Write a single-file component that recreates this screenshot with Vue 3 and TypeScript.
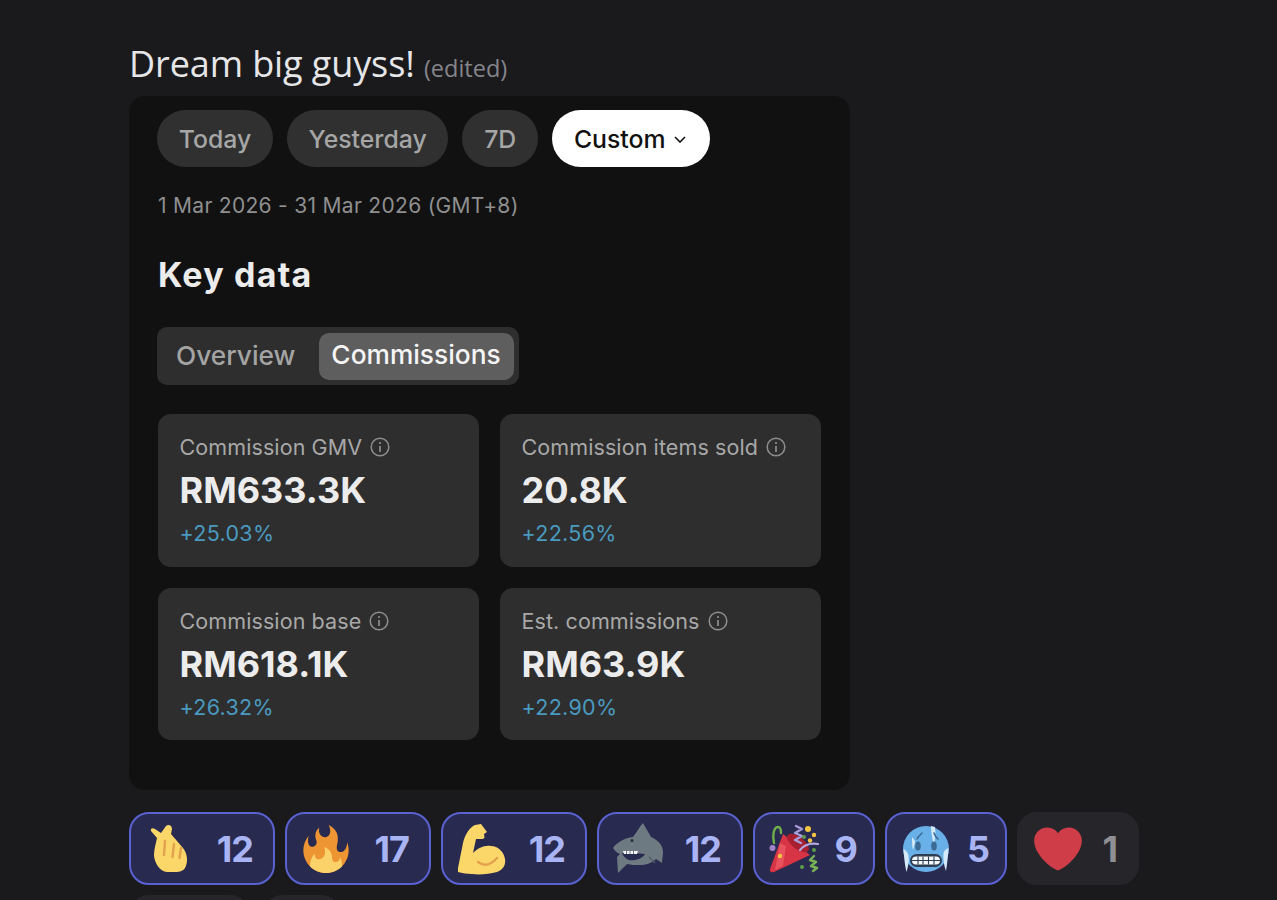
<script setup lang="ts">
type Reaction = { id: string; count: number; mine: boolean };

const chips = ["Today", "Yesterday", "7D"];

const stats = [
	{ label: "Commission GMV", value: "RM633.3K", change: "+25.03%" },
	{ label: "Commission items sold", value: "20.8K", change: "+22.56%" },
	{ label: "Commission base", value: "RM618.1K", change: "+26.32%" },
	{ label: "Est. commissions", value: "RM63.9K", change: "+22.90%" }
];

const reactions: Reaction[] = [
	{ id: "hand", count: 12, mine: true },
	{ id: "fire", count: 17, mine: true },
	{ id: "muscle", count: 12, mine: true },
	{ id: "shark", count: 12, mine: true },
	{ id: "party", count: 9, mine: true },
	{ id: "cold", count: 5, mine: true },
	{ id: "heart", count: 1, mine: false }
];
</script>

<template>
	<div class="page">
		<h1 class="message">Dream big guyss! <span class="edited">(edited)</span></h1>

		<div class="shot">
			<div class="chips">
				<button v-for="chip in chips" :key="chip" class="chip">{{ chip }}</button>
				<button class="chip active">
					Custom
					<svg class="chevron" viewBox="0 0 12 7" width="12" height="7">
						<path d="M1 1l5 5 5-5" fill="none" stroke="#111" stroke-width="1.6" />
					</svg>
				</button>
			</div>
			<div class="range">1 Mar 2026 - 31 Mar 2026 (GMT+8)</div>
			<h2 class="title">Key data</h2>
			<div class="tabs">
				<span class="tab">Overview</span>
				<span class="tab selected">Commissions</span>
			</div>
			<div class="grid">
				<div v-for="stat in stats" :key="stat.label" class="stat">
					<div class="label">
						{{ stat.label }}
						<svg viewBox="0 0 20 20" width="20" height="20">
							<circle cx="10" cy="10" r="8.8" fill="none" stroke="#8e8e8e" stroke-width="1.5" />
							<circle cx="10" cy="6" r="1.1" fill="#8e8e8e" />
							<path d="M10 9v6" stroke="#8e8e8e" stroke-width="1.7" />
						</svg>
					</div>
					<div class="value">{{ stat.value }}</div>
					<div class="change">{{ stat.change }}</div>
				</div>
			</div>
		</div>

		<div class="reactions">
			<div v-for="r in reactions" :key="r.id" class="reaction" :class="{ mine: r.mine, narrow: r.count < 10 && r.mine }">
				<svg v-if="r.id === 'hand'" class="emoji" viewBox="0 0 48 48">
					<path d="M5 6C4 3 7 2.500 9 4l6 4 5-7c2-2 6-1 6 3l-1 5 12 14c5 6 5 15 2 20-3 5-11 4-18 4-7 0-13-10-13-17 0-6 2-12 3-17z" fill="#fbd669" />
					<path d="M19 16l-1 14M28 19l-1.500 13M35 23l-1.500 10" fill="none" stroke="#e4a24e" stroke-width="2.400" stroke-linecap="round" />
				</svg>
				<svg v-else-if="r.id === 'fire'" class="emoji" viewBox="0 0 36 36">
					<path d="M35 19c0-2.062-.367-4.039-1.04-5.868-.46 5.389-3.333 8.157-6.335 6.868-2.812-1.208-.917-5.917-.777-8.164.236-3.809-.012-8.169-6.931-11.794 2.875 5.5.333 8.917-2.333 9.125-2.958.231-5.667-2.542-4.667-7.042-3.238 2.386-3.332 6.402-2.333 9 1.042 2.708-.042 4.958-2.583 5.208-2.84.28-4.418-3.041-2.963-8.333C2.52 10.965 1 14.805 1 19c0 9.389 7.611 17 17 17s17-7.611 17-17z" fill="#ed9433" />
					<path d="M28.394 23.999c.148 3.084-2.561 4.293-4.019 3.709-2.106-.843-1.541-2.291-2.083-5.291s-2.625-5.083-5.708-6c2.25 6.333-1.247 8.667-3.08 9.084-1.872.426-3.753-.001-3.968-4.007C7.352 23.668 6 26.676 6 30c0 .368.023.73.055 1.09C9.125 34.124 13.342 36 18 36s8.875-1.876 11.945-4.91c.032-.36.055-.722.055-1.09 0-2.187-.584-4.236-1.606-6.001z" fill="#fbd26a" />
				</svg>
				<svg v-else-if="r.id === 'muscle'" class="emoji" viewBox="0 0 48 48">
					<path d="M0 43L5 18C7 9 12 2 17 0l6-1 6 8-3 2 .5 4-2 1H18l-3 14c5-5 11-8 18-7 7 0 13 6 14 13 1 6-2 11-8 13-8 2-17 3-25 2-5 0-10-1-14-2z" fill="#fbd669" />
					<path d="M20 37q9 7 19-4" fill="none" stroke="#e4a24e" stroke-width="2.400" stroke-linecap="round" />
				</svg>
				<svg v-else-if="r.id === 'shark'" class="emoji" viewBox="0 0 48 48">
					<path d="M-1 23C3 17 11 13 19 12c4-5 7-11 10-14 2 4 6 10 8 14 7 3 12 8 12 15 0 4-1 7-1 11l-6-4c-4 4-10 6-16 6-5 0-9 0-13-1L4 48l-1-16 3-3c-3-1-5-3-7-6z" fill="#6e7a82" />
					<path d="M8 28c7 0 15 0 23 1-3 5-10 7-16 6-3-1-6-4-7-7z" fill="#282a50" />
					<path d="M9 26h15l-1 3H10z" fill="#f3f3f3" />
					<path d="M12.500 26v3M16 26v3M19.500 26v3" stroke="#6e7a82" stroke-width="1" />
					<circle cx="18" cy="15.500" r="1.500" fill="#2b2f36" />
					<path d="M35 32l6 6" stroke="#4f5a62" stroke-width="1.200" />
				</svg>
				<svg v-else-if="r.id === 'party'" class="emoji" viewBox="0 0 48 48">
					<path d="M0 44L13 9l27 21L4 47C1 48-1 46 0 44z" fill="#d73545" />
					<path d="M10 18L5 45l8-4 3-20z" fill="#e8525c" />
					<ellipse cx="28" cy="18" rx="6" ry="13" transform="rotate(-52 28 18)" fill="#a8202f" />
					<path d="M4 18C2 10 4 2 8 2c3 0 3 3 3 6" fill="none" stroke="#6fae4a" stroke-width="2.400" stroke-linecap="round" />
					<path d="M26 1l6 3-7 4 7 3-7 4 6 3" fill="none" stroke="#a99bd6" stroke-width="2.400" stroke-linecap="round" stroke-linejoin="round" />
					<path d="M30 25c4-5 11-7 18-6" fill="none" stroke="#b3a6dd" stroke-width="2.200" stroke-linecap="round" />
					<path d="M44 31l-4 4 6 2-5 4 6 2-4 3" fill="none" stroke="#77b255" stroke-width="2.400" stroke-linecap="round" stroke-linejoin="round" />
					<circle cx="38" cy="4" r="3" fill="#f5c542" />
					<circle cx="44" cy="10" r="2.200" fill="#f5c542" />
					<circle cx="40" cy="15.500" r="2.200" fill="#f5c542" />
					<circle cx="34" cy="12" r="2" fill="#5e9c46" />
					<circle cx="2.500" cy="23" r="3" fill="#a082c8" />
					<circle cx="44" cy="25" r="2" fill="#5e9c46" />
					<circle cx="32" cy="42" r="2" fill="#5e9c46" />
					<circle cx="10" cy="31" r="2.200" fill="#f5c542" />
				</svg>
				<svg v-else-if="r.id === 'cold'" class="emoji" viewBox="0 0 48 48">
					<circle cx="24" cy="24" r="23" fill="#6ab0e8" />
					<path d="M29 1c0 6 1 12 3 19 1-6 2-12 1-18zM10 12c0 5 0 9 1 13 1-3 2-6 2-9zM1.500 24C2 32 3 41 4.500 47c1.500-5 3-11 2-17-1-3-3-5-5-6zM46.500 23C46 32 45 40 44 46c-2-5-3-12-2.500-18 1-3 3-4 5-5z" fill="#d3e9f8" />
					<ellipse cx="16" cy="21" rx="2.800" ry="4.500" fill="#3b6a94" />
					<ellipse cx="32" cy="21" rx="2.800" ry="4.500" fill="#3b6a94" />
					<path d="M36 14c-2-1.500-3-3-4-6M15 14c1-2 3-4 5-6" fill="none" stroke="#3b6a94" stroke-width="1.600" stroke-linecap="round" />
					<rect x="8" y="29" width="32" height="13" rx="6.500" fill="#2c3e52" />
					<path d="M14 31.500h20a4 4 0 0 1 0 8H14a4 4 0 0 1 0-8z" fill="#f4f7fa" />
					<path d="M16 31.500v8M21 31.500v8M26.500 31.500v8M32 31.500v8M10 35.500h28" stroke="#2c3e52" stroke-width="1.100" />
				</svg>
				<svg v-else class="emoji" viewBox="0 0 36 36">
					<path d="M35.885 11.833c0-5.45-4.418-9.868-9.867-9.868-3.308 0-6.227 1.633-8.018 4.129-1.791-2.496-4.71-4.129-8.017-4.129-5.45 0-9.868 4.417-9.868 9.868 0 .772.098 1.52.266 2.241C1.751 22.587 11.216 31.568 18 34.034c6.783-2.466 16.249-11.447 17.617-19.959.17-.721.268-1.469.268-2.242z" fill="#cf3d48" />
				</svg>
				<span class="count">{{ r.count }}</span>
			</div>
			<div class="reaction blank first"></div>
			<div class="reaction blank second"></div>
		</div>
	</div>
</template>

<style>
html,
body {
	margin: 0;
	background: #1a1a1d;
	overflow: hidden;
}
</style>

<style scoped>
.page {
	height: 900px;
	box-sizing: border-box;
	padding: 40px 0 0 129px;
	overflow: hidden;
	font-family: Inter, "Liberation Sans", sans-serif;
}

.message {
	margin: 0;
	height: 56px;
	line-height: 48px;
	font-family: "Open Sans", sans-serif;
	font-size: 36px;
	font-weight: 400;
	letter-spacing: -0.1px;
	color: #e6e6e8;
}

.edited {
	font-size: 23.500px;
	letter-spacing: 0;
	color: #85858b;
}

.shot {
	width: 721px;
	box-sizing: border-box;
	padding: 14px 29px 50px 29px;
	background: #111112;
	border-radius: 16px;
}

.chips {
	display: flex;
	gap: 14px;
	margin-left: -1px;
}

.chip {
	height: 57px;
	padding: 0 21.7px;
	border: none;
	border-radius: 29px;
	background: #303030;
	color: #a6a6a6;
	font-family: inherit;
	font-size: 24.8px;
	font-weight: 500;
	display: flex;
	align-items: center;
}

.chip.active {
	background: #fff;
	color: #111;
	gap: 8px;
	padding: 0 24px 0 22px;
}

.chevron {
	margin-top: 1px;
}

.range {
	margin-top: 24px;
	line-height: 30px;
	font-size: 21px;
	letter-spacing: 0.3px;
	color: #8f8f8f;
}

.title {
	margin: 34px 0 0;
	line-height: 40px;
	font-size: 34px;
	font-weight: 700;
	letter-spacing: 1.200px;
	color: #ececec;
}

.tabs {
	display: inline-flex;
	align-items: center;
	margin: 32px 0 0 -1px;
	height: 58px;
	box-sizing: border-box;
	padding: 0 5px 0 19px;
	gap: 24px;
	background: #2e2e2e;
	border-radius: 10px;
}

.tab {
	padding-bottom: 2px;
	font-size: 26.3px;
	font-weight: 500;
	color: #a4a4a4;
}

.tab.selected {
	height: 47px;
	line-height: 44px;
	padding: 0 13px 0 12px;
	border-radius: 10px;
	background: #5e5e5e;
	color: #f5f5f5;
}

.grid {
	display: grid;
	grid-template-columns: 1fr 1fr;
	gap: 21px;
	margin-top: 29px;
}

.stat {
	height: 152.5px;
	box-sizing: border-box;
	padding: 18px 21.500px 0;
	background: #2e2e2e;
	border-radius: 13px;
}

.label {
	display: flex;
	align-items: center;
	gap: 8px;
	line-height: 30px;
	font-size: 21.500px;
	letter-spacing: 0.1px;
	color: #a8a8a8;
}

.value {
	margin-top: 6px;
	line-height: 44px;
	font-size: 36px;
	font-weight: 700;
	color: #ececec;
}

.change {
	margin-top: 6px;
	line-height: 30px;
	font-size: 21.500px;
	letter-spacing: 0.3px;
	color: #4a9ac0;
}

.reactions {
	display: flex;
	flex-wrap: wrap;
	gap: 10px;
	width: 1020px;
	margin-top: 22px;
}

.reaction {
	width: 122px;
	height: 73px;
	box-sizing: border-box;
	display: flex;
	align-items: center;
	justify-content: space-between;
	padding: 0 20px 0 15px;
	background: #26262a;
	border: 2px solid #26262a;
	border-radius: 20px;
}

.reaction.mine {
	width: 146px;
	background: #282a50;
	border-color: #5a62d2;
}

.reaction.mine.narrow {
	width: 122px;
	padding-right: 16px;
}

.reaction.blank.first {
	width: 121px;
}

.reaction.blank.second {
	width: 78px;
	margin-left: 3px;
}

.emoji {
	width: 48px;
	height: 48px;
	flex: none;
	overflow: visible;
}

.count {
	font-size: 36px;
	font-weight: 700;
	color: #8f8f94;
	letter-spacing: -1px;
}

.mine .count {
	color: #a9b4f5;
}
</style>
